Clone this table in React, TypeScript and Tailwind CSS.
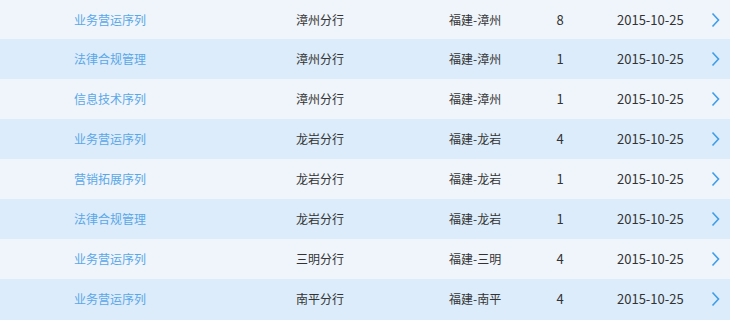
import React from 'react'

const rows = [
  { seq: '业务营运序列', branch: '漳州分行', area: '福建-漳州', count: 8, date: '2015-10-25' },
  { seq: '法律合规管理', branch: '漳州分行', area: '福建-漳州', count: 1, date: '2015-10-25' },
  { seq: '信息技术序列', branch: '漳州分行', area: '福建-漳州', count: 1, date: '2015-10-25' },
  { seq: '业务营运序列', branch: '龙岩分行', area: '福建-龙岩', count: 4, date: '2015-10-25' },
  { seq: '营销拓展序列', branch: '龙岩分行', area: '福建-龙岩', count: 1, date: '2015-10-25' },
  { seq: '法律合规管理', branch: '龙岩分行', area: '福建-龙岩', count: 1, date: '2015-10-25' },
  { seq: '业务营运序列', branch: '三明分行', area: '福建-三明', count: 4, date: '2015-10-25' },
  { seq: '业务营运序列', branch: '南平分行', area: '福建-南平', count: 4, date: '2015-10-25' },
]

const Chevron = () => (
  <svg width="9" height="16" viewBox="0 0 9 16" className="block">
    <path d="M1.5 1.5 L7.5 8 L1.5 14.5" fill="none" stroke="#3f9deb" strokeWidth="1.6" />
  </svg>
)

export default function App() {
  return (
    <div
      className="w-[730px] h-[320px] overflow-hidden bg-[#dcecfa] text-[12px] text-[#333]"
      style={{ fontFamily: '"Noto Sans CJK SC", "Liberation Sans", sans-serif' }}
    >
      {rows.map((r, i) => (
        <div
          key={i}
          className={
            (i % 2 === 0 ? 'bg-[#eff5fb] ' : 'bg-[#dcecfa] ') +
            (i === 0 ? 'h-[39px] ' : 'h-10 ') +
            'flex items-center pl-[74px] pr-[10px]'
          }
        >
          <div className="w-[222px] text-[#5aa7e8]">{r.seq}</div>
          <div className="w-[153px]">{r.branch}</div>
          <div className="w-[91px]">{r.area}</div>
          <div className="w-10 text-center text-[13px]">{r.count}</div>
          <div className="ml-[37px] text-[13px]">{r.date}</div>
          <div className="ml-auto">
            <Chevron />
          </div>
        </div>
      ))}
    </div>
  )
}
